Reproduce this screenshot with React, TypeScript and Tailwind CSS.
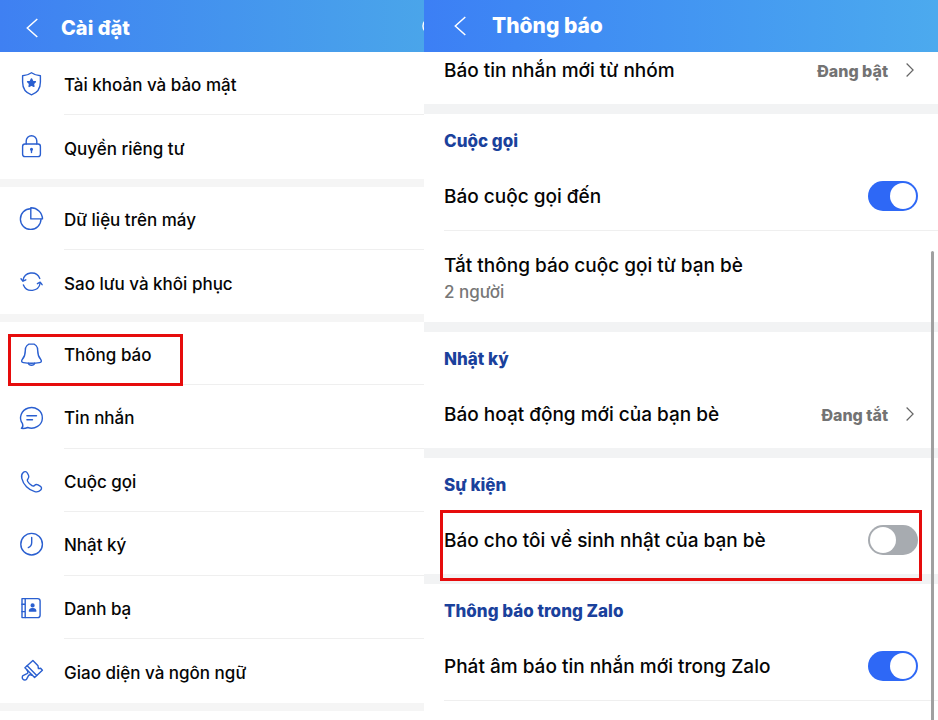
import { useId, useState, type ReactNode } from "react";

type SettingItem = { label: string; icon: ReactNode; highlighted?: boolean };

const settingGroups: SettingItem[][] = [
  [
    { label: "Tài khoản và bảo mật", icon: <ShieldIcon /> },
    { label: "Quyền riêng tư", icon: <LockIcon /> },
  ],
  [
    { label: "Dữ liệu trên máy", icon: <PieIcon /> },
    { label: "Sao lưu và khôi phục", icon: <SyncIcon /> },
  ],
  [
    { label: "Thông báo", icon: <BellIcon />, highlighted: true },
    { label: "Tin nhắn", icon: <ChatIcon /> },
    { label: "Cuộc gọi", icon: <PhoneIcon /> },
    { label: "Nhật ký", icon: <ClockIcon /> },
    { label: "Danh bạ", icon: <ContactsIcon /> },
    { label: "Giao diện và ngôn ngữ", icon: <BrushIcon /> },
  ],
];

function Icon({ children }: { children: ReactNode }) {
  return (
    <svg
      viewBox="0 0 24 24"
      className="size-6 shrink-0 overflow-visible text-[#2a5fd0]"
      fill="none"
      stroke="currentColor"
      strokeWidth="1.4"
      strokeLinecap="round"
      strokeLinejoin="round"
      aria-hidden="true"
    >
      {children}
    </svg>
  );
}

function ShieldIcon() {
  return (
    <Icon>
      <path d="M11.5.8C9 2.6 5.8 3.5 2.6 3.8V10c0 6.5 3 10.8 8.9 12.8 5.9-2 8.9-6.3 8.9-12.8V3.8C17.2 3.5 14 2.6 11.5.8Z" />
      <path
        d="m11.5 6.9 1.2 2.5 2.7.4-2 1.9.5 2.7-2.4-1.3-2.4 1.3.5-2.7-2-1.9 2.7-.4Z"
        fill="currentColor"
      />
    </Icon>
  );
}

function LockIcon() {
  return (
    <Icon>
      <rect x="2.6" y="9" width="17.8" height="12.6" rx="2.4" />
      <path d="M6.2 9V6a5.3 5.3 0 0 1 10.6 0v3" />
      <path d="M11.5 14.6v3" />
      <circle cx="11.5" cy="14.3" r=".8" fill="currentColor" />
    </Icon>
  );
}

function PieIcon() {
  return (
    <Icon>
      <path d="M10.6 1.8A10.3 10.3 0 1 0 21 12.2" />
      <path d="M10.8.7v11.2h11.7A11.5 11.5 0 0 0 10.8.7Z" />
    </Icon>
  );
}

function SyncIcon() {
  return (
    <Icon>
      <path d="M3 10.4a8.8 8.8 0 0 1 16.8-2" />
      <path d="M20.2 13a8.8 8.8 0 0 1-16.8 2" />
      <path d="m1 8.8 2 2.4 2.8-1.4" />
      <path d="m17.4 13.7 2.8-1.5 1.9 2.5" />
    </Icon>
  );
}

function BellIcon() {
  return (
    <Icon>
      <path d="M11.5 1.8c-4 0-6.2 2.9-6.2 6.6 0 4.9-1.2 6.9-2.9 8.9-1.3 1.6-.9 3 1 3.3 5 .8 11.2.8 16.2 0 1.9-.3 2.3-1.7 1-3.3-1.7-2-2.9-4-2.9-8.9 0-3.7-2.2-6.6-6.2-6.6Z" />
      <path d="M8.4 21.3c.6 2.6 5.6 2.6 6.2 0" />
    </Icon>
  );
}

function ChatIcon() {
  return (
    <Icon>
      <path d="M1.4 23.4c1.4-.9 1.8-2.6 1.1-4.7a10.9 10.3 0 1 1 5.2 3.8c-2 .9-4.1 1.2-6.3.9Z" />
      <path d="M6.9 10.8h9.6M6.9 14.8h5.6" />
    </Icon>
  );
}

function PhoneIcon() {
  return (
    <Icon>
      <path d="M3.2 3.6C4.5 2.2 6.4 2.4 7.3 4l1.2 2.3c.7 1.4.4 2.6-.6 3.6-.8.8-.8 1.6-.2 2.6 1.1 1.8 2.4 3.1 4.2 4.2 1 .6 1.8.5 2.6-.3 1-1 2.2-1.2 3.5-.5l2.1 1.2c1.6.9 1.9 2.7.6 4-1.5 1.5-3.5 2.1-5.9 1.5C8.5 20.9 3.3 15.6 1.8 9.3 1.2 6.9 1.7 5 3.2 3.6Z" />
    </Icon>
  );
}

function ClockIcon() {
  return (
    <Icon>
      <circle cx="11.6" cy="12.2" r="10.8" />
      <path d="M11.7 5.4v5c0 2.4-1.2 4.2-3.4 5.2" />
    </Icon>
  );
}

function ContactsIcon() {
  return (
    <Icon>
      <path d="M2 2.6h15.7a2.4 2.4 0 0 1 2.4 2.4v14.2a2.4 2.4 0 0 1-2.4 2.4H2Z" />
      <path d="M5.2 2.6v19M2 8.2h3M2 15.6h3" />
      <circle cx="12.6" cy="9.4" r="1.4" fill="currentColor" />
      <path d="M9.4 15c.2-1.8 1.4-2.4 3.2-2.4s3 .6 3.2 2.4Z" fill="currentColor" />
    </Icon>
  );
}

function BrushIcon() {
  return (
    <Icon>
      <path d="M12.9 1.4 4.9 8.8 14.6 18.6 22.4 11.3 20.6 9.2 18.4 9.6 18 6.8Z" />
      <path d="m7.2 6.8 9.5 9.7" />
      <path d="M7 11c1.200 1.600 1.200 2.900 0 3.700l-4 1.900a2.500 2.500 0 1 0 3.600 3.600l1.900-3.600c.8-1.200 2-1.200 3.700-.3" />
    </Icon>
  );
}

function ChevronLeft() {
  return (
    <svg viewBox="0 0 12 20" className="h-5 w-3" fill="none" stroke="currentColor" strokeWidth="1.5" aria-hidden="true">
      <path d="M11.3 1 1.3 10l10 9" />
    </svg>
  );
}

function ChevronRight() {
  return (
    <svg viewBox="0 0 8 14" className="h-3.5 w-2 text-[#666]" fill="none" stroke="currentColor" strokeWidth="1.2" aria-hidden="true">
      <path d="M.6.5 7.1 7 .6 13.5" />
    </svg>
  );
}

function Divider() {
  return <div className="h-2.5 bg-[#f2f3f4]" />;
}

function SectionTitle({ children }: { children: ReactNode }) {
  return <h2 className="h-12 px-5 pt-[15px] text-[17px] leading-6 font-extrabold text-[#1a419c]">{children}</h2>;
}

function LinkRow({ label, value }: { label: string; value: string }) {
  return (
    <a href="#" className="flex h-[68px] items-center pr-6 pl-5">
      <span className="flex-1 pt-0.5 text-[19px] leading-6 font-medium">{label}</span>
      <span className="mr-[18px] pt-0.5 text-base font-extrabold text-[#737373]">{value}</span>
      <ChevronRight />
    </a>
  );
}

function ToggleRow({ label, defaultOn = false }: { label: string; defaultOn?: boolean }) {
  const id = useId();
  const [on, setOn] = useState(defaultOn);

  return (
    <div className="flex h-[68px] items-center px-5">
      <label htmlFor={id} className="flex-1 pt-0.5 text-[19px] leading-6 font-medium">
        {label}
      </label>
      <input
        id={id}
        type="checkbox"
        role="switch"
        checked={on}
        onChange={(e) => setOn(e.target.checked)}
        className="flex h-[30px] w-[50px] appearance-none items-center rounded-full bg-[#a7abb0] px-0.5 before:size-[26px] before:rounded-full before:bg-white checked:justify-end checked:bg-[#2e68f6]"
      />
    </div>
  );
}

function SettingsPanel() {
  return (
    <section className="overflow-hidden bg-white">
      <header className="relative flex h-[52px] items-center overflow-hidden bg-linear-to-r from-[#3f80f2] to-[#4aa5ea] px-6 pt-1 text-white">
        <button type="button" aria-label="Quay lại" className="w-[37px] pl-0.5">
          <ChevronLeft />
        </button>
        <h1 className="text-[20px] leading-7 font-extrabold">Cài đặt</h1>
        <svg viewBox="0 0 16 16" className="absolute top-4.5 -right-3.5 size-4" fill="none" stroke="currentColor" strokeWidth="1.5" aria-hidden="true">
          <circle cx="8" cy="8" r="7" />
        </svg>
      </header>
      <nav>
        {settingGroups.map((group, i) => (
          <div key={i}>
            <ul>
              {group.map((item, j) => (
                <li key={item.label} className="relative odd:h-[63px] even:h-16">
                  <a href="#" className="flex h-full items-center gap-5 pl-5">
                    {item.icon}
                    <span
                      className={`flex h-full flex-1 items-center pt-[3px] text-[17px] leading-6 font-medium ${
                        j < group.length - 1 ? "border-b border-[#efefef]" : ""
                      }`}
                    >
                      {item.label}
                    </span>
                  </a>
                  {item.highlighted && (
                    <div className="pointer-events-none absolute top-3 left-2 h-[52px] w-[175px] border-3 border-[#e60c0c]" />
                  )}
                </li>
              ))}
            </ul>
            <div className="h-2 bg-[#f5f5f5]" />
          </div>
        ))}
      </nav>
    </section>
  );
}

function NotificationPanel() {
  return (
    <section className="relative overflow-hidden bg-white">
      <header className="flex h-[52px] items-center bg-linear-to-r from-[#3c7ff5] to-[#4caaee] px-7 text-white">
        <button type="button" aria-label="Quay lại" className="w-10 pl-0.5">
          <ChevronLeft />
        </button>
        <h1 className="text-[21px] leading-7 font-extrabold">Thông báo</h1>
      </header>

      {/* first row is partly scrolled under the header */}
      <div className="-mt-4">
        <LinkRow label="Báo tin nhắn mới từ nhóm" value="Đang bật" />
      </div>
      <Divider />

      <SectionTitle>Cuộc gọi</SectionTitle>
      <ToggleRow label="Báo cuộc gọi đến" defaultOn />
      <div className="ml-5 h-px bg-[#efefef]" />
      <a href="#" className="flex h-[91px] flex-col px-5 pt-[21px]">
        <span className="text-[19px] leading-7 font-medium">Tắt thông báo cuộc gọi từ bạn bè</span>
        <span className="text-[17px] leading-6 font-medium text-[#777]">2 người</span>
      </a>
      <Divider />

      <SectionTitle>Nhật ký</SectionTitle>
      <LinkRow label="Báo hoạt động mới của bạn bè" value="Đang tắt" />
      <Divider />

      <SectionTitle>Sự kiện</SectionTitle>
      <div className="relative">
        <ToggleRow label="Báo cho tôi về sinh nhật của bạn bè" />
        <div className="pointer-events-none absolute inset-x-4 top-1 -bottom-[7px] border-3 border-[#e60c0c]" />
      </div>
      <Divider />

      <SectionTitle>Thông báo trong Zalo</SectionTitle>
      <ToggleRow label="Phát âm báo tin nhắn mới trong Zalo" defaultOn />
      <div className="ml-5 h-px bg-[#efefef]" />

      <div className="absolute top-[251px] right-1 bottom-0 w-[3px] rounded-t-full bg-[#a0a0a0]" />
    </section>
  );
}

export default function App() {
  return (
    <main className="grid h-screen grid-cols-[424fr_514fr] overflow-hidden bg-white font-['Inter','Liberation_Sans',sans-serif] text-[#050505]">
      <SettingsPanel />
      <NotificationPanel />
    </main>
  );
}
